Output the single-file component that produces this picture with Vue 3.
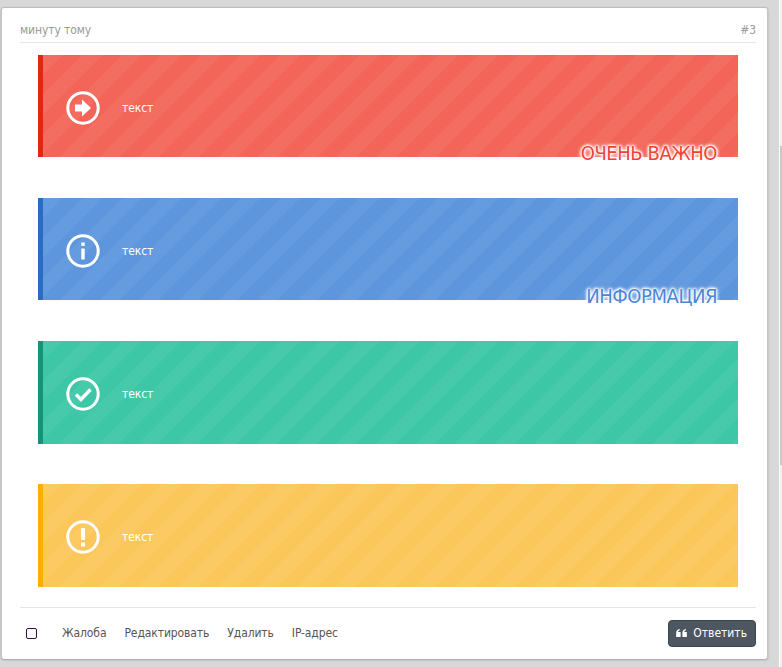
<script setup>
const banners = [
  { kind: 'danger', icon: 'arrow', label: 'ОЧЕНЬ ВАЖНО' },
  { kind: 'info', icon: 'info', label: 'ИНФОРМАЦИЯ' },
  { kind: 'success', icon: 'check', label: '' },
  { kind: 'warning', icon: 'warn', label: '' },
]
const links = ['Жалоба', 'Редактировать', 'Удалить', 'IP-адрес']
</script>

<template>
  <div class="page">
    <article class="card">
      <header class="head">
        <span>минуту тому</span>
        <span>#3</span>
      </header>
      <div class="list">
        <section v-for="b in banners" :key="b.kind" class="banner" :class="b.kind">
          <svg class="icon" viewBox="0 0 34 34" width="34" height="34" aria-hidden="true">
            <circle cx="17" cy="17" r="15.2" fill="none" stroke="#fff" stroke-width="3" />
            <path v-if="b.icon === 'arrow'" d="M9 13.5h7V8.5l9 8.5-9 8.5v-5H9z" fill="#fff" />
            <template v-else-if="b.icon === 'info'">
              <rect x="15.3" y="8.5" width="3.4" height="3.4" fill="#fff" />
              <path d="M15.3 14.5h3.4V25.5h-3.4z" fill="#fff" />
            </template>
            <path v-else-if="b.icon === 'check'" d="M10 17.5l5 5 9.5-10" fill="none" stroke="#fff" stroke-width="3.4" />
            <template v-else>
              <rect x="15" y="8" width="4" height="12" fill="#fff" />
              <rect x="15" y="22.5" width="4" height="4" fill="#fff" />
            </template>
          </svg>
          <span class="text">текст</span>
          <span v-if="b.label" class="tag">{{ b.label }}</span>
        </section>
      </div>
      <footer class="foot">
        <span class="check"></span>
        <nav class="links">
          <a v-for="l in links" :key="l">{{ l }}</a>
        </nav>
        <button class="reply" type="button">
          <svg viewBox="0 0 12 9" width="11" height="8" aria-hidden="true">
            <path d="M0 4.5C0 2 1.5.5 4 0v1.5C3 1.8 2.4 2.4 2.3 3.4H5V9H0zM7 4.5C7 2 8.5.5 11 0v1.5c-1 .3-1.6.9-1.7 1.9H12V9H7z" fill="#fff" />
          </svg>
          Ответить
        </button>
      </footer>
    </article>
    <div class="track"><div class="thumb"></div></div>
  </div>
</template>

<style>
html, body { margin: 0; background: #d8d8d8; overflow: hidden; }
</style>

<style scoped>
.page {
  position: relative;
  box-sizing: border-box;
  width: 782px;
  height: 667px;
  padding: 7px 14px 0 1px;
  background: #d8d8d8;
  font-family: "DejaVu Sans", "Noto Sans", sans-serif;
  font-stretch: condensed;
}
.card {
  box-sizing: border-box;
  height: 652px;
  padding: 0 11px 0 18px;
  background: #fff;
  border: 1px solid #c4c4c4;
  border-top: 1px solid #bdbdbd;
  border-bottom: 0;
  border-radius: 3px;
  box-shadow: 0 1px 2px rgba(0, 0, 0, 0.25);
}
.head {
  display: flex;
  justify-content: space-between;
  align-items: center;
  height: 35px;
  padding-top: 9px;
  box-sizing: border-box;
  border-bottom: 1px solid #e5e5e5;
  color: #999;
  font-size: 12px;
  letter-spacing: -0.1px;
}
.list {
  display: flex;
  flex-direction: column;
  gap: 40.5px;
  margin: 11.75px 18px 0;
}
.banner {
  position: relative;
  display: flex;
  align-items: center;
  box-sizing: border-box;
  height: 102.6px;
  padding-top: 3px;
  padding-left: 23px;
  border-left: 5px solid;
  background-image: repeating-linear-gradient(
    135deg,
    rgba(255, 255, 255, 0.05) 0 14px,
    transparent 14px 28px
  );
}
.danger { background-color: #f26558; border-color: #e3260f; }
.info { background-color: #5d96dd; border-color: #2a6cc0; }
.success { background-color: #3dc7a6; border-color: #159377; }
.warning { background-color: #fbc75a; border-color: #fdae00; }
.icon { flex: none; }
.text {
  margin-left: 22px;
  color: #fff;
  font-size: 12px;
  letter-spacing: -0.1px;
}
.tag {
  position: absolute;
  right: 21px;
  bottom: -9px;
  font-size: 20px;
  line-height: 26px;
  letter-spacing: -0.45px;
  text-shadow: 0 0 2px #fff, 0 0 2px #fff, 0 0 3px #fff, 0 0 3px #fff, 0 0 4px #fff, 0 0 4px #fff;
}
.danger .tag { color: #ee4433; }
.info .tag { color: #4a86d8; }
.foot {
  display: flex;
  align-items: center;
  height: 52px;
  margin-top: 20px;
  border-top: 1px solid #e5e5e5;
  box-sizing: border-box;
}
.check {
  box-sizing: border-box;
  width: 11px;
  height: 11px;
  margin-left: 6px;
  border: 1px solid #2e1245;
  border-radius: 2px;
}
.links {
  display: flex;
  gap: 18px;
  margin-left: 25px;
  color: #555;
  font-size: 12px;
  letter-spacing: -0.1px;
}
.reply {
  display: flex;
  align-items: center;
  gap: 6px;
  height: 27px;
  margin-left: auto;
  padding: 0 8px 0 7px;
  color: #fff;
  font: condensed 12px "DejaVu Sans", "Noto Sans", sans-serif;
  background: #4d5661;
  border: 1px solid #3f4750;
  border-radius: 4px;
}
.track {
  position: absolute;
  top: 0;
  right: 0;
  bottom: 0;
  width: 3px;
  padding-top: 146px;
  padding-bottom: 202px;
  box-sizing: border-box;
  background: #f1f1f1;
  border-left: 1px solid #fff;
}
.thumb {
  height: 100%;
  background: #c8c8c8;
}
</style>
